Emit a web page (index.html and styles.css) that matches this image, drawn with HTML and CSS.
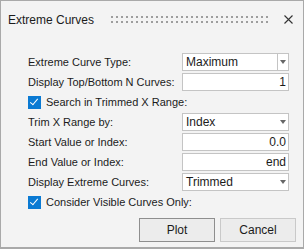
FILE: index.html
```html
<!DOCTYPE html>
<html lang="en">
<head>
    <meta charset="UTF-8">
    <title>Extreme Curves</title>
    <link rel="stylesheet" href="styles.css">
</head>
<body>
    <div class="window">
        <div class="titlebar">
            <span class="title">Extreme Curves</span>
            <span class="grip"></span>
            <svg class="close" width="9" height="9" viewBox="0 0 9 9">
                <path d="M0.5 0.5 L8.5 8.5 M8.5 0.5 L0.5 8.5" stroke="#333" stroke-width="1.1" fill="none"/>
            </svg>
        </div>

        <div class="form">
            <label class="lbl">Extreme Curve Type:</label>
            <div class="select focus">
                <span>Maximum</span>
                <span class="drop"><i class="chev"></i></span>
            </div>

            <label class="lbl">Display Top/Bottom N Curves:</label>
            <div class="input">1</div>

            <div class="check-row">
                <span class="check"></span>
                <span>Search in Trimmed X Range:</span>
            </div>

            <label class="lbl">Trim X Range by:</label>
            <div class="select">
                <span>Index</span>
                <span class="drop"><i class="chev"></i></span>
            </div>

            <label class="lbl">Start Value or Index:</label>
            <div class="input">0.0</div>

            <label class="lbl">End Value or Index:</label>
            <div class="input">end</div>

            <label class="lbl">Display Extreme Curves:</label>
            <div class="select">
                <span>Trimmed</span>
                <span class="drop"><i class="chev"></i></span>
            </div>

            <div class="check-row">
                <span class="check"></span>
                <span>Consider Visible Curves Only:</span>
            </div>
        </div>

        <div class="buttons">
            <button class="btn default">Plot</button>
            <button class="btn">Cancel</button>
        </div>
    </div>
</body>
</html>
```

FILE: styles.css
```css
* {
    box-sizing: border-box;
}

body {
    margin: 0;
    font-family: "Liberation Sans", Arial, sans-serif;
    font-size: 11px;
    color: #1b1b1b;
}

.window {
    width: 304px;
    height: 249px;
    border: 1px solid #a9a9a9;
    border-bottom-width: 2px;
    background: #f3f3f3;
}

/* title bar */
.titlebar {
    height: 37px;
    display: flex;
    align-items: center;
    padding: 0 10px 0 7px;
}

.title {
    font-size: 12px;
}

.grip {
    flex: 1;
    height: 7px;
    margin: 0 13px 0 17px;
    background:
        linear-gradient(90deg, #9d9d9d 2px, transparent 2px) 0 0 / 5px 2px repeat-x,
        linear-gradient(90deg, #9d9d9d 2px, transparent 2px) 0 5px / 5px 2px repeat-x;
}

/* form */
.form {
    display: grid;
    grid-template-columns: 154px 107px;
    grid-auto-rows: 18px;
    row-gap: 2px;
    padding: 15px 0 0 27px;
}

.lbl {
    display: flex;
    align-items: center;
    white-space: nowrap;
}

.select,
.input {
    border: 1px solid #c4c4c4;
    background: #fff;
    display: flex;
    align-items: center;
    padding: 0 2px 0 3px;
    font-size: 12px;
}

.select {
    justify-content: space-between;
    padding-right: 0;
}

.input {
    justify-content: flex-end;
}

.drop {
    width: 11px;
    height: 100%;
    display: flex;
    align-items: center;
    justify-content: center;
}

.select.focus .drop {
    border-left: 1px solid #c4c4c4;
}

.chev {
    width: 0;
    height: 0;
    border-left: 3.5px solid transparent;
    border-right: 3.5px solid transparent;
    border-top: 4px solid #666;
}

.check-row {
    grid-column: 1 / 3;
    display: flex;
    align-items: center;
    gap: 5px;
}

.check {
    width: 13px;
    height: 13px;
    background: #0a7ad3;
    position: relative;
}

.check::after {
    content: "";
    position: absolute;
    left: 4px;
    top: 1px;
    width: 3px;
    height: 7px;
    border: solid #fff;
    border-width: 0 1.5px 1.5px 0;
    transform: rotate(40deg);
}

/* buttons */
.buttons {
    display: flex;
    gap: 5px;
    padding: 7px 0 0 138px;
}

.btn {
    width: 76px;
    height: 24px;
    font-family: inherit;
    font-size: 12px;
    color: #1b1b1b;
    background: #ececec;
    border: 1px solid #c9c9c9;
}

.btn.default {
    border-color: #8e8e8e;
}
```
